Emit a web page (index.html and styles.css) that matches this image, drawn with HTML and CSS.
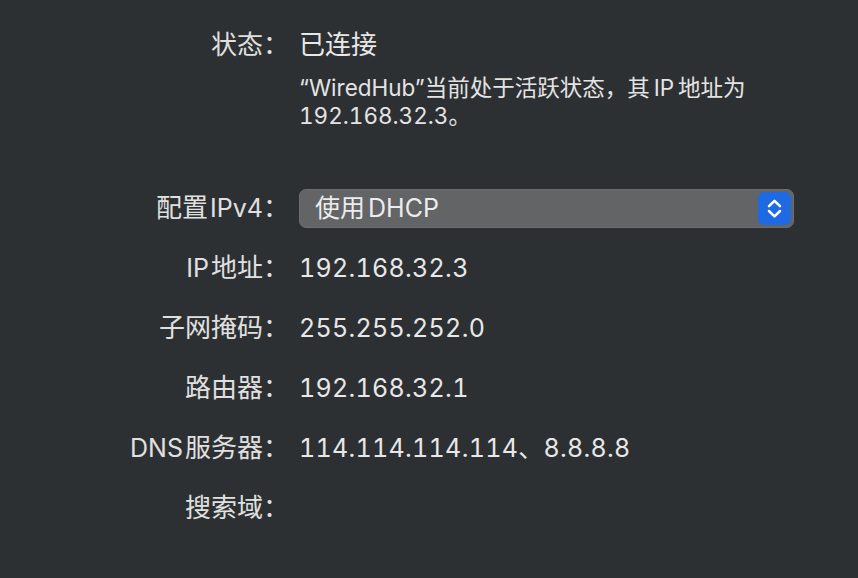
FILE: index.html
```html
<!DOCTYPE html>
<html lang="zh-CN">
<head>
<meta charset="utf-8">
<title>网络</title>
<link rel="stylesheet" href="styles.css">
</head>
<body>
<div class="panel">
  <div class="row status-row">
    <div class="label">状态：</div>
    <div class="value status">已连接</div>
  </div>
  <div class="row desc-row">
    <div class="label"></div>
    <div class="desc">“WiredHub”当前处于活跃状态，其<span class="sp">IP</span>地址为<br>192.168.32.3。</div>
  </div>
  <div class="row field first">
    <div class="label">配置<span class="lat-l">IPv4</span>：</div>
    <div class="popup">
      <span class="popup-text">使用<span class="spl">DHCP</span></span>
      <span class="stepper">
        <svg width="33" height="33" viewBox="0 0 33 33" aria-hidden="true">
          <path d="M11 14.2 L16.5 8.8 L22 14.2" fill="none" stroke="#ffffff" stroke-width="2.5" stroke-linecap="round" stroke-linejoin="round"/>
          <path d="M11 19 L16.5 24.4 L22 19" fill="none" stroke="#ffffff" stroke-width="2.5" stroke-linecap="round" stroke-linejoin="round"/>
        </svg>
      </span>
    </div>
  </div>
  <div class="row field">
    <div class="label"><span class="lat-r">IP</span>地址：</div>
    <div class="value">192.168.32.3</div>
  </div>
  <div class="row field">
    <div class="label">子网掩码：</div>
    <div class="value">255.255.252.0</div>
  </div>
  <div class="row field">
    <div class="label">路由器：</div>
    <div class="value">192.168.32.1</div>
  </div>
  <div class="row field">
    <div class="label"><span class="lat-r">DNS</span>服务器：</div>
    <div class="value">114.114.114.114、8.8.8.8</div>
  </div>
  <div class="row field">
    <div class="label">搜索域：</div>
    <div class="value"></div>
  </div>
</div>
</body>
</html>
```

FILE: styles.css
```css
* { box-sizing: border-box; }
html, body {
  margin: 0;
  padding: 0;
  background: #2d3032;
}
body {
  width: 858px;
  height: 578px;
  overflow: hidden;
  font-family: Inter, "Noto Sans CJK SC", sans-serif;
  font-variant-numeric: tabular-nums;
  color: #e4e4e4;
}
.panel {
  display: flex;
  flex-direction: column;
  padding-top: 28px;
}
.row {
  display: grid;
  grid-template-columns: 289px 495px;
  column-gap: 10px;
  align-items: center;
}
.label {
  text-align: right;
  font-size: 26px;
  line-height: 34px;
  color: #e0e0e0;
  white-space: nowrap;
}
.lat-l { font-size: 25px; margin-left: 2px; }
.lat-r { font-size: 25px; margin-right: 2px; }
.value {
  font-size: 25px;
  line-height: 34px;
  color: #e8e8e8;
  white-space: nowrap;
  letter-spacing: 0.3px;
}
.status {
  font-size: 26px;
  letter-spacing: 0;
}
.status-row {
  height: 34px;
}
.desc-row {
  margin-top: 12px;
}
.desc {
  font-size: 22.5px;
  line-height: 28px;
  color: #e4e4e4;
  white-space: nowrap;
}
.sp { margin: 0 4px; }
.spl { margin-left: 3px; }
.field {
  height: 60px;
}
.field.first {
  margin-top: 48px;
}
.popup {
  height: 39px;
  border-radius: 7px;
  background: #636466;
  border: 1px solid #6c6d6f;
  display: flex;
  align-items: center;
  justify-content: space-between;
  padding: 0 2px 0 15px;
  font-size: 25px;
  color: #ececec;
}
.popup-text {
  line-height: 34px;
}
.stepper {
  width: 33px;
  height: 33px;
  border-radius: 6px;
  background: #1f6ae3;
  display: flex;
}
```
